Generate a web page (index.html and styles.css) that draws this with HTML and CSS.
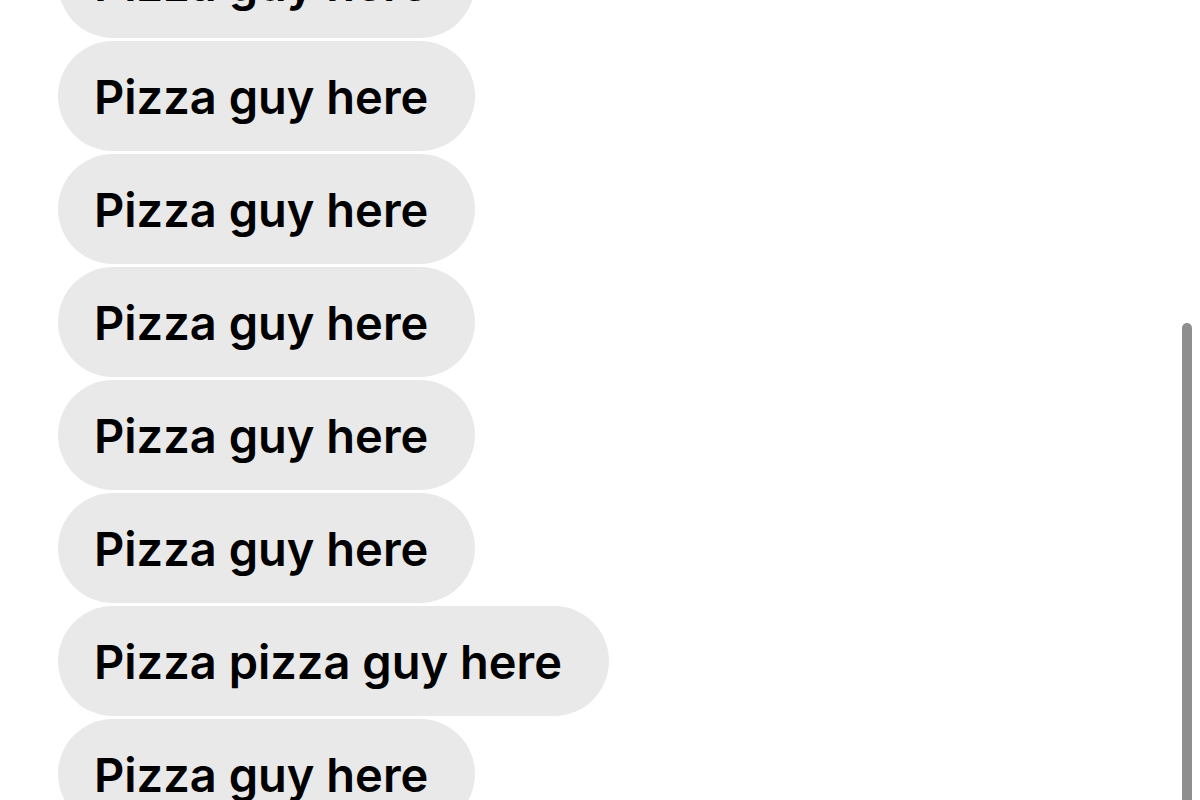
FILE: index.html
```html
<!DOCTYPE html>
<html lang="en">
<head>
    <meta charset="UTF-8">
    <meta name="viewport" content="width=device-width, initial-scale=1.0">
    <title>Messages</title>
    <link rel="stylesheet" href="styles.css">
</head>
<body>
    <div class="thread">
        <div class="messages">
            <div class="bubble">Pizza guy here</div>
            <div class="bubble">Pizza guy here</div>
            <div class="bubble">Pizza guy here</div>
            <div class="bubble">Pizza guy here</div>
            <div class="bubble">Pizza guy here</div>
            <div class="bubble">Pizza guy here</div>
            <div class="bubble">Pizza pizza guy here</div>
            <div class="bubble">Pizza guy here</div>
        </div>
        <div class="scrollbar"></div>
    </div>
</body>
</html>
```
FILE: styles.css
```css
body {
    font-family: Inter, "Noto Sans", sans-serif;
    background-color: #fff;
    margin: 0;
    padding: 0;
}

.thread {
    position: relative;
    height: 800px;
    overflow: hidden;
}

.messages {
    display: flex;
    flex-direction: column;
    align-items: flex-start;
    gap: 3px;
    margin-top: -72px;
    padding-left: 58px;
}

.bubble {
    background-color: #e9e9e9;
    color: #000;
    font-size: 47px;
    font-weight: 600;
    height: 110px;
    box-sizing: border-box;
    padding: 0 47px 0 36px;
    display: flex;
    align-items: center;
    border-radius: 55px;
}

.scrollbar {
    position: absolute;
    left: 1182px;
    top: 323px;
    width: 10px;
    height: 500px;
    background-color: #8e8e8e;
    border-radius: 5px;
}
```
